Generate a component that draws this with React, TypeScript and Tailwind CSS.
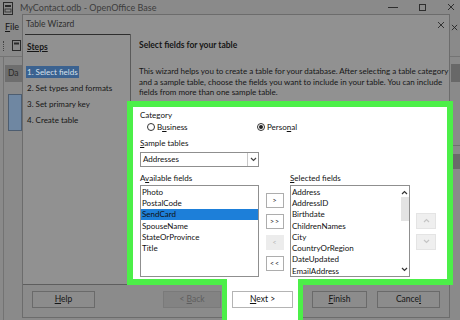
import React from "react";

const font = "font-['Lato','Liberation_Sans',sans-serif]";

function Chevron({ up = false, className = "" }: { up?: boolean; className?: string }) {
  return (
    <svg width="7" height="5" viewBox="0 0 7 5" className={className}>
      <polyline
        points={up ? "1,4 3.5,1.5 6,4" : "1,1 3.5,3.5 6,1"}
        fill="none"
        stroke="currentColor"
        strokeWidth="1.2"
      />
    </svg>
  );
}

function Cross({ size = 8, className = "" }: { size?: number; className?: string }) {
  return (
    <svg width={size} height={size} viewBox="0 0 8 8" className={className}>
      <path d="M1 1 L7 7 M7 1 L1 7" stroke="currentColor" strokeWidth="1" />
    </svg>
  );
}

function Radio({ checked = false }: { checked?: boolean }) {
  return (
    <span className="w-[8px] h-[8px] rounded-full border border-[#333] flex items-center justify-center bg-white">
      {checked && <span className="w-[4px] h-[4px] rounded-full bg-[#222]" />}
    </span>
  );
}

function MoveBtn({ label, disabled = false }: { label: string; disabled?: boolean }) {
  return (
    <div
      className={`h-[15px] w-[18px] flex items-center justify-center text-[7px] tracking-[1px] ${
        disabled
          ? "bg-[#ececec] text-[#b5b5b5]"
          : "bg-white border border-[#adadad] text-[#222]"
      }`}
    >
      {label}
    </div>
  );
}

function DlgBtn({
  children,
  w,
  className = "",
  muted = false,
}: {
  children: React.ReactNode;
  w: string;
  className?: string;
  muted?: boolean;
}) {
  return (
    <div
      className={`${w} h-[17px] flex items-center justify-center text-[8.5px] border ${
        muted
          ? "bg-[#838383] border-[#7a7a7a] text-[#5e5e5e]"
          : "bg-[#8c8c8c] border-[#6a6a6a] text-[#161616]"
      } ${className}`}
    >
      {children}
    </div>
  );
}

const available = ["Photo", "PostalCode", "SendCard", "SpouseName", "StateOrProvince", "Title"];
const selected = [
  "Address",
  "AddressID",
  "Birthdate",
  "ChildrenNames",
  "City",
  "CountryOrRegion",
  "DateUpdated",
  "EmailAddress",
];
const steps = ["1. Select fields", "2. Set types and formats", "3. Set primary key", "4. Create table"];

export default function App() {
  return (
    <div className={`w-[460px] h-[320px] relative overflow-hidden bg-[#8a8a8a] text-[#161616] ${font}`}>
      {/* app title bar */}
      <div className="h-[19px] flex items-start pt-[2px] pl-[3px] pr-[5px]">
        <svg width="10" height="13" viewBox="0 0 10 13" className="text-[#2a2a2a]">
          <rect x="0.5" y="0.5" width="9" height="12" fill="none" stroke="currentColor" />
          <rect x="2" y="3" width="6" height="2" fill="currentColor" />
          <rect x="2" y="7" width="6" height="3" fill="none" stroke="currentColor" strokeWidth="0.8" />
        </svg>
        <span className="ml-[7px] text-[9px] leading-[12px] text-[#3c3c3c]">MyContact.odb - OpenOffice Base</span>
        <div className="ml-auto h-[10px] flex items-center gap-[21px] text-[#2e2e2e]">
          <span className="w-[10px] h-[1px] bg-[#2e2e2e]" />
          <span className="w-[7px] h-[7px] border border-[#2e2e2e]" />
          <Cross size={8} />
        </div>
      </div>
      {/* menu */}
      <div className="h-[16px] flex items-center pl-[5px] pr-[2px] text-[9px]">
        <span>
          <span className="underline">F</span>ile
        </span>
        <Cross size={7} className="ml-auto text-[#222]" />
      </div>
      {/* toolbar */}
      <div className="h-[22px] flex items-center pl-[3px] border-b border-[#747474]">
        <span className="w-px h-[10px] border-l border-dotted border-[#444]" />
        <svg width="9" height="11" viewBox="0 0 9 11" className="ml-[8px] text-[#2a2a2a]">
          <rect x="0.5" y="0.5" width="8" height="10" fill="none" stroke="currentColor" />
          <rect x="2" y="2.5" width="5" height="2" fill="currentColor" />
        </svg>
      </div>
      {/* content */}
      <div className="flex justify-between h-[263px]">
        <div className="ml-[3px] w-[19px] border-l border-[#737373] flex flex-col">
          <div className="mt-[8px] ml-[1px] h-[17px] bg-[#6e6e6e] text-[8.5px] flex items-center pl-[3px] text-[#2a2a2a]">
            Da
          </div>
          <div className="mt-[12px] ml-[4px] h-[37px] bg-[#6f87a2] border border-[#4d5d70]" />
        </div>
        <div className="w-[9px] flex flex-col">
          <div className="mt-[7px] h-[18px] bg-[#686868]" />
          <div className="mt-[63px] border-t border-[#707070]" />
          <div className="mt-[8px] h-[15px] bg-[#6a6a6a]" />
        </div>
      </div>

      {/* Table Wizard dialog */}
      <div className="absolute left-[22px] top-[14px] w-[428px] h-[304px] flex flex-col bg-[#919191] border border-[#6c6c6c]">
        <div className="h-[19px] flex items-center justify-between pl-[3px] pr-[4px] text-[8.5px] text-[#2f2f2f]">
          <span>Table Wizard</span>
          <Cross size={8} className="text-[#333]" />
        </div>
        <div className="h-[250px] flex">
          {/* steps */}
          <div className="w-[108px] shrink-0 border-r border-[#5a5a5a] flex flex-col">
            <div className="ml-[2px] border-t border-[#2e2e2e]" />
            <div className="pl-[4px]">
              <div className="mt-[6px] h-[12px] flex items-center text-[8.5px] font-bold">
                <span className="underline">Steps</span>
              </div>
              <div className="mt-[11px] flex flex-col">
                {steps.map((s, i) => (
                  <div key={s} className="h-[16px] flex items-center text-[8px]">
                    <span className={i === 0 ? "bg-[#3b6290] text-[#d8e0ea] px-[1px] -ml-[1px]" : ""}>{s}</span>
                  </div>
                ))}
              </div>
            </div>
          </div>
          {/* main */}
          <div className="flex-1 min-w-0 flex flex-col">
            <div className="pl-[8px]">
              <div className="mt-[5px] h-[12px] flex items-center text-[8.5px] font-bold">
                Select fields for your table
              </div>
              <p className="mt-[15px] text-[8px] leading-[10.5px] whitespace-nowrap">
                This wizard helps you to create a table for your database. After selecting a table category
                <br />
                and a sample table, choose the fields you want to include in your table. You can include
                <br />
                fields from more than one sample table.
              </p>
            </div>
            <div className="relative z-10 mt-[3px] -ml-[4px] w-[326px] shrink-0 h-[184px] border-[6px] border-[#4cef48] bg-white text-[8px] text-[#111]">
              <div className="pl-[7px] pt-[3px] flex flex-col">
                <div className="h-[11px] flex items-center">Category</div>
                <div className="mt-[1px] h-[11px] flex items-center">
                  <div className="ml-[7px] w-[110px] flex items-center gap-[2px]">
                    <Radio />
                    <span>
                      B<span className="underline">u</span>siness
                    </span>
                  </div>
                  <div className="flex items-center gap-[2px]">
                    <Radio checked />
                    <span>
                      Perso<span className="underline">n</span>al
                    </span>
                  </div>
                </div>
                <div className="mt-[5px] h-[11px] flex items-center">
                  <span>
                    <span className="underline">S</span>ample tables
                  </span>
                </div>
                <div className="mt-[3px] w-[119px] h-[15px] border border-[#8f8f8f] flex items-center">
                  <span className="flex-1 pl-[2px]">Addresses</span>
                  <span className="w-[11px] h-full border-l border-[#c8c8c8] flex items-center justify-center text-[#444]">
                    <Chevron />
                  </span>
                </div>
                <div className="mt-[6px] flex">
                  <div className="w-[119px] shrink-0 flex flex-col">
                    <div className="h-[11px] flex items-center">
                      <span>
                        A<span className="underline">v</span>ailable fields
                      </span>
                    </div>
                    <div className="mt-[1px] h-[92px] border border-[#8f8f8f] pt-[0.5px] flex flex-col">
                      {available.map((f) => (
                        <div
                          key={f}
                          className={`h-[11.3px] flex items-center pl-[1px] ${f === "SendCard" ? "bg-[#1d7fd9]" : ""}`}
                        >
                          {f}
                        </div>
                      ))}
                    </div>
                  </div>
                  <div className="ml-[7px] pt-[20px] flex flex-col gap-[6px]">
                    <MoveBtn label=">" />
                    <MoveBtn label=">>" />
                    <MoveBtn label="<" disabled />
                    <MoveBtn label="<<" />
                  </div>
                  <div className="ml-[6px] w-[120px] shrink-0 flex flex-col">
                    <div className="h-[11px] flex items-center">
                      <span>
                        <span className="underline">S</span>elected fields
                      </span>
                    </div>
                    <div className="mt-[1px] h-[92px] border border-[#8f8f8f] flex">
                      <div className="flex-1 pt-[0.5px] flex flex-col">
                        {selected.map((f) => (
                          <div key={f} className="h-[11.3px] flex items-center pl-[1px]">
                            {f}
                          </div>
                        ))}
                      </div>
                      <div className="w-[9px] flex flex-col items-center text-[#333]">
                        <Chevron up className="mt-[4px]" />
                        <div className="mt-[2px] w-[8px] h-[24px] bg-[#e3e3e3]" />
                        <Chevron className="mt-auto mb-[4px]" />
                      </div>
                    </div>
                  </div>
                  <div className="ml-[6px] pt-[40px] flex flex-col gap-[5px] text-[#c4c4c4]">
                    <div className="w-[20px] h-[16px] bg-[#efefef] border border-[#e4e4e4] flex items-center justify-center">
                      <Chevron up />
                    </div>
                    <div className="w-[20px] h-[16px] bg-[#efefef] border border-[#e4e4e4] flex items-center justify-center">
                      <Chevron />
                    </div>
                  </div>
                </div>
              </div>
            </div>
          </div>
        </div>
        {/* bottom buttons */}
        <div className="flex-1 border-t border-[#5e5e5e] bg-[#8b8b8b] pt-[6px] flex items-start">
          <DlgBtn w="w-[63px]" className="ml-[9px]">
            <span>
              <span className="underline">H</span>elp
            </span>
          </DlgBtn>
          <DlgBtn w="w-[58px]" className="ml-[68px]" muted>
            <span>
              &lt; <span className="underline">B</span>ack
            </span>
          </DlgBtn>
          <div className="relative ml-[1px] w-[81px] h-[17px]">
            <div className="absolute z-20 -top-[12px] left-0 w-[81px] h-[60px] border-x-[5px] border-[#4cef48] bg-white">
              <div className="mt-[12px] ml-[5px] w-[61px] h-[17px] border border-[#b4b4b4] bg-white flex items-center justify-center text-[8.5px] text-[#111]">
                <span>
                  <span className="underline">N</span>ext &gt;
                </span>
              </div>
            </div>
          </div>
          <DlgBtn w="w-[55px]" className="ml-[9px]">
            <span>
              <span className="underline">F</span>inish
            </span>
          </DlgBtn>
          <DlgBtn w="w-[63px]" className="ml-[10px]">
            <span>
              Cance<span className="underline">l</span>
            </span>
          </DlgBtn>
        </div>
      </div>
    </div>
  );
}
